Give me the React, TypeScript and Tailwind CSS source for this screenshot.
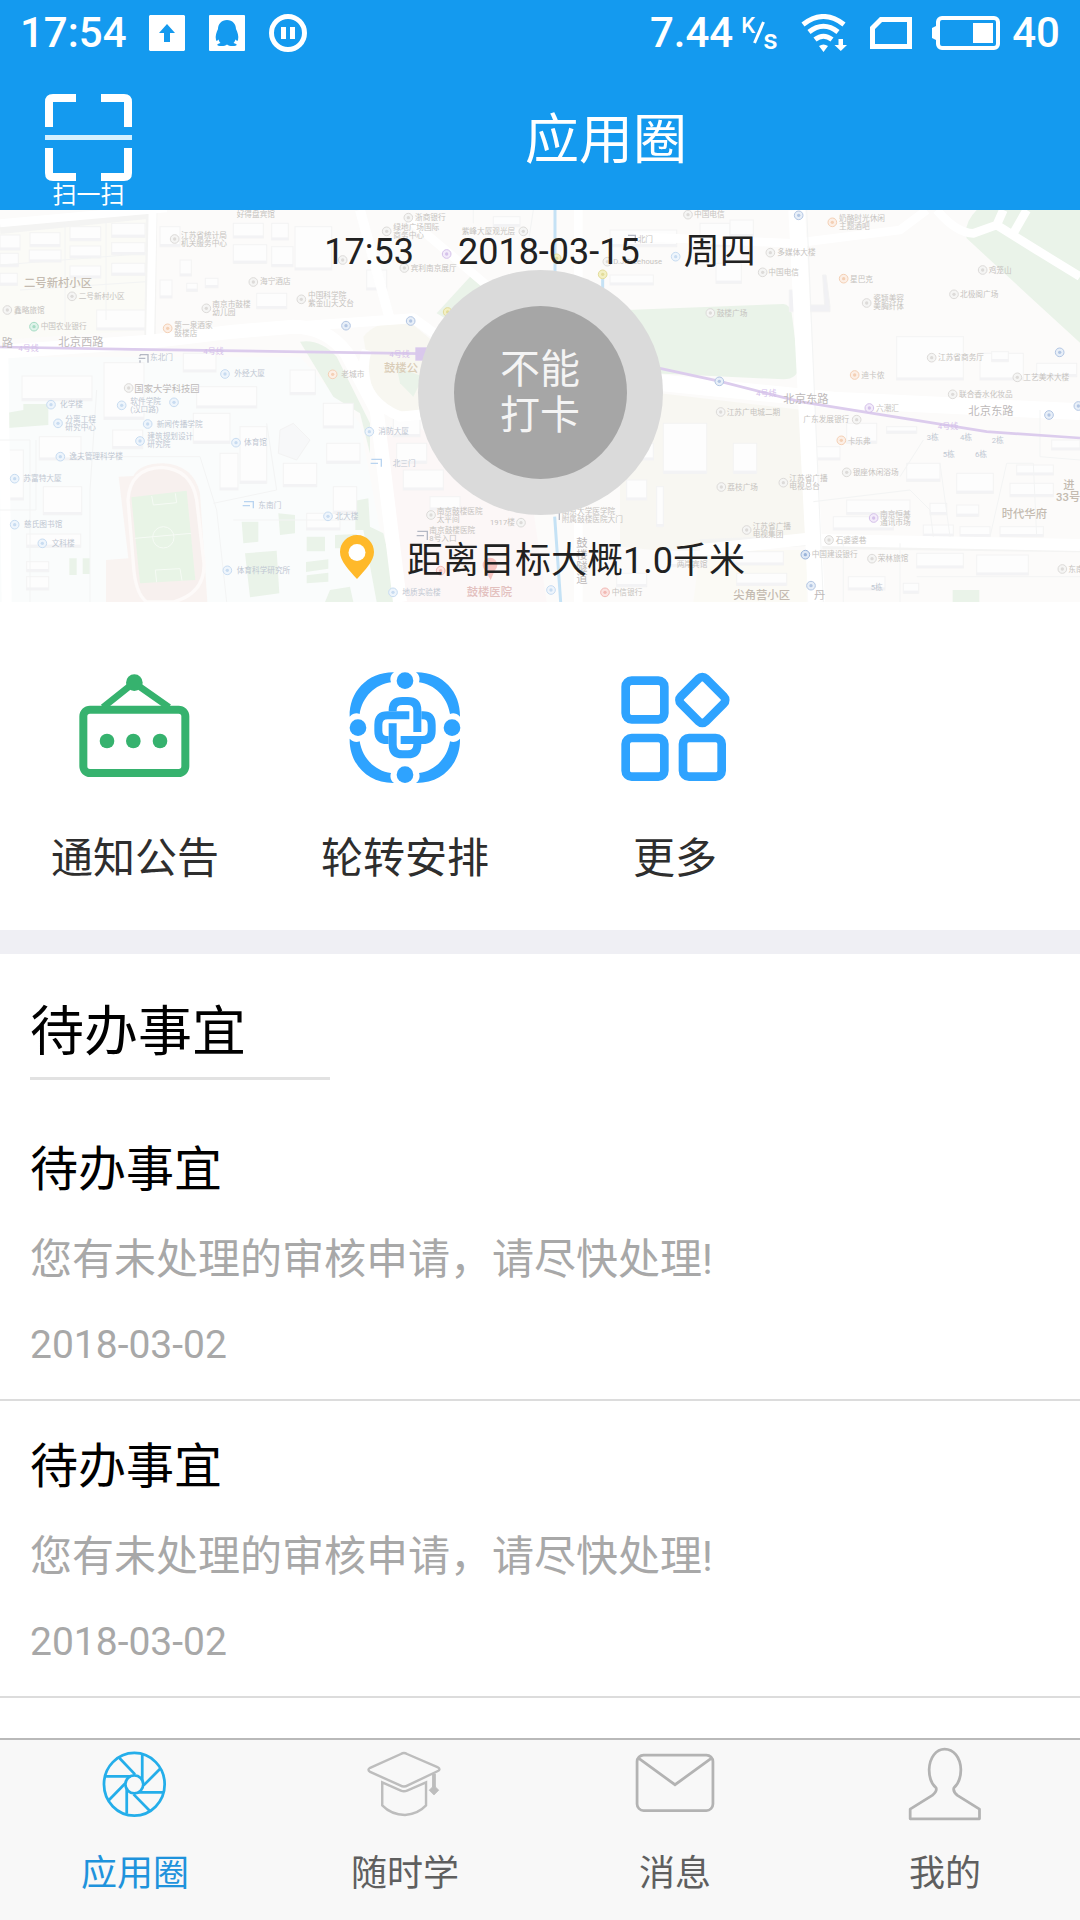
import type { ReactNode } from "react";

type Label = [x: number, y: number, text: string];

const GRAY_LABELS: Label[] = [
  [710, 12, "好得盘宾馆"], [543, 77, "江苏省统计局"], [543, 101, "机关服务中心"], [780, 215, "海宁酒店"],
  [924, 256, "中国科学院"], [924, 280, "紫金山天文台"], [637, 283, "南京市鼓楼"], [637, 307, "幼儿园"],
  [523, 345, "第一泉酒家"], [523, 369, "鼓楼店"], [236, 260, "二号新村小区"], [42, 300, "鑫略旅馆"],
  [122, 350, "中国农业银行"], [1024, 493, "老城市"], [1245, 22, "浙商银行"], [1180, 53, "绿地广场国际"],
  [1180, 77, "商务中心"], [1385, 64, "紫峰大厦观光层"], [1232, 174, "宾利南京展厅"],
  [2082, 14, "中国电信"], [1913, 87, "北门"], [1840, 153, "D.J.Treehouse"], [1310, 904, "南京鼓楼医院"],
  [1310, 928, "太平间"], [1470, 938, "1917楼"], [1288, 962, "南京鼓楼医院"], [1288, 986, "8号入口"],
  [1685, 905, "南京大学医学院"], [1685, 929, "附属鼓楼医院大门"], [1835, 1147, "中信银行"], [2030, 1063, "两岸宾馆"],
  [2517, 26, "奶酪时光休闲"], [2517, 50, "主题酒吧"], [2332, 128, "多媒体大楼"], [2305, 187, "中国电信"],
  [2550, 207, "星巴克"], [2620, 266, "瓷颖美容"], [2620, 290, "美胸纤体"], [2966, 181, "鸡笼山"],
  [2880, 254, "北极阁广场"], [2150, 309, "鼓楼广场"], [2814, 443, "江苏省商务厅"], [2584, 496, "迪卡侬"],
  [3070, 502, "工艺美术大楼"], [2877, 553, "联合香水化妆品"], [2628, 594, "六潮汇"], [2180, 606, "江苏广电城二期"],
  [2410, 629, "广东发展银行"], [2543, 693, "卡乐弗"], [2558, 788, "银座休闲浴场"], [2368, 806, "江苏省广播"],
  [2368, 830, "电视总台"], [2182, 832, "荔枝广场"], [2258, 948, "江苏省广播"], [2258, 972, "电视集团"],
  [2640, 912, "南京恒基"], [2640, 936, "通讯市场"], [2507, 990, "石婆婆巷"], [2435, 1034, "中国建设银行"],
  [2633, 1046, "荣林旅馆"], [3205, 1077, "东南"],
];

const CAMPUS_LABELS: Label[] = [
  [450, 443, "东北门"], [703, 491, "外经大厦"], [391, 574, "软件学院"], [391, 598, "(汉口路)"],
  [180, 584, "化学楼"], [196, 628, "分离工程"], [196, 652, "研究中心"], [470, 642, "新闻传播学院"],
  [442, 680, "建筑规划设计"], [442, 704, "研究院"], [732, 698, "体育馆"], [208, 740, "逸夫管理科学楼"],
  [70, 806, "苏富特大厦"], [72, 944, "慈氏图书馆"], [155, 1000, "文科楼"], [775, 887, "东南门"],
  [1006, 918, "北大楼"], [710, 1081, "体育科学研究所"], [1135, 664, "消防大厦"], [1178, 760, "北三门"],
  [1207, 1146, "地质实验楼"], [2780, 682, "3栋"], [2880, 682, "4栋"], [2975, 690, "2栋"],
  [2828, 732, "5栋"], [2925, 732, "6栋"], [2612, 1132, "5栋"],
];

const AREA_LABELS: Label[] = [
  [72, 219, "二号新村小区"], [3005, 912, "时代华府"], [2200, 1154, "尖角营小区"], [3190, 825, "进"],
  [3168, 860, "33号"],
];

const ROAD_LABELS: Label[] = [
  [5, 398, "路"], [175, 396, "北京西路"], [2350, 568, "北京东路"], [2905, 604, "北京东路"],
  [2442, 1156, "丹"], [1729, 1000, "鼓"], [1729, 1036, "楼"], [1729, 1072, "隧"], [1729, 1108, "道"],
];

const METRO_LABELS: Label[] = [[55, 414, "4号线"], [610, 424, "4号线"], [1168, 432, "4号线"], [2268, 551, "4号线"], [2813, 648, "4号线"]];

const GRAY_PINS = [
  [524, 87], [760, 216], [904, 268], [619, 295], [216, 259], [22, 300], [386, 534], [1225, 23], [1160, 64],
  [1570, 64], [1213, 174], [1028, 150], [2064, 14], [1822, 155], [1293, 915], [1563, 938], [2311, 128],
  [2288, 187], [2600, 279], [2948, 180], [2862, 253], [2131, 309], [2795, 443], [3052, 502], [2858, 553],
  [2162, 606], [2570, 629], [2540, 787], [2350, 818], [2164, 831], [2240, 960], [2487, 990], [2616, 1046],
  [3187, 1077],
];
const BLUE_PINS = [
  [675, 492], [153, 584], [174, 640], [365, 586], [522, 577], [443, 642], [420, 693], [708, 698], [181, 740],
  [44, 806], [44, 944], [127, 1000], [984, 919], [682, 1081], [1108, 665], [1179, 1147], [1653, 1140], [2027, 140],
];
const METRO_PINS = [[1038, 347], [1232, 333], [2158, 514], [3147, 615], [3235, 588], [2396, 16], [2433, 1127], [3179, 427]];
const ORANGE_PINS = [[503, 355], [998, 493], [2497, 37], [2531, 206], [2564, 495], [2524, 691]];

// x, y, width, height
const BLOCKS = [
  [0, 75, 60, 45], [90, 68, 90, 42], [210, 50, 92, 42], [335, 40, 100, 42], [0, 130, 55, 40], [88, 120, 95, 36],
  [210, 108, 92, 36], [335, 98, 100, 36], [0, 190, 52, 36], [210, 168, 92, 36], [335, 160, 100, 36], [290, 300, 150, 60],
  [480, 50, 60, 60], [540, 150, 34, 48], [560, 220, 32, 24], [616, 205, 38, 28], [480, 210, 36, 54], [700, 40, 90, 44],
  [700, 104, 100, 56], [815, 40, 50, 50], [815, 110, 64, 60], [885, 50, 110, 130], [770, 250, 90, 46], [550, 430, 98, 56],
  [66, 498, 210, 74], [312, 458, 120, 170], [590, 530, 180, 64], [580, 610, 110, 90], [338, 660, 90, 56], [118, 680, 125, 70],
  [130, 830, 115, 84], [80, 972, 162, 40], [80, 1055, 66, 30], [80, 1100, 66, 40], [22, 720, 48, 150], [720, 650, 80, 170],
  [660, 730, 54, 110], [850, 760, 100, 70], [980, 700, 100, 60], [920, 910, 100, 50], [870, 480, 76, 74], [970, 580, 90, 74],
  [1000, 830, 70, 80], [1180, 620, 80, 60], [1190, 700, 90, 60], [1210, 780, 120, 60], [1290, 860, 90, 40], [1100, 180, 60, 60],
  [1480, 20, 80, 30], [1830, 60, 200, 50], [1830, 195, 130, 30], [2100, 40, 90, 70], [2190, 30, 70, 50],
  [2148, 160, 76, 60], [2690, 380, 200, 130], [2940, 430, 130, 80], [2975, 425, 50, 30], [3110, 460, 120, 40],
  [2540, 640, 90, 60], [2660, 650, 90, 20], [2440, 710, 80, 40], [2720, 760, 100, 54], [2870, 790, 110, 60],
  [3030, 820, 130, 40], [3050, 765, 110, 30], [2540, 870, 190, 44], [2500, 920, 180, 40], [2790, 880, 50, 34],
  [2870, 885, 66, 34], [2770, 945, 90, 34], [2880, 950, 90, 30], [3000, 950, 130, 30], [2750, 1030, 140, 44],
  [2930, 1035, 155, 60], [2545, 1100, 110, 40], [2710, 1120, 46, 30], [2210, 1090, 150, 36], [2200, 1025, 150, 40],
  [2200, 700, 70, 90], [1990, 640, 130, 150], [1900, 700, 60, 50], [1880, 810, 60, 60], [1970, 830, 20, 120],
  [3155, 690, 85, 30], [1850, 1090, 90, 40], [2010, 1020, 110, 50],
];

function MapLabels({ items, className }: { items: Label[]; className: string }) {
  return (
    <g className={className}>
      {items.map(([x, y, text]) => (
        <text key={`${x}-${y}`} x={x} y={y} dominantBaseline="central">{text}</text>
      ))}
    </g>
  );
}

function Pins({ items, fill, stroke }: { items: number[][]; fill: string; stroke: string }) {
  return (
    <g>
      {items.map(([x, y]) => (
        <g key={`${x}-${y}`}>
          <circle cx={x} cy={y} r="13" fill={fill} stroke={stroke} strokeWidth="3" />
          <circle cx={x} cy={y} r="5" fill={stroke} />
        </g>
      ))}
    </g>
  );
}

/** Faded street map behind the punch-in button. */
function MapBackground() {
  return (
    <svg
      viewBox="0 0 3240 1176"
      preserveAspectRatio="xMidYMid slice"
      className="absolute inset-0 h-full w-full"
      aria-hidden="true"
    >
      <rect width="3240" height="1176" fill="#fcfbfa" />
      <path d="M0 30L440 20V360L0 390Z" fill="#fbfbf7" />
      <path d="M0 440H900L1080 640L1180 1176H0Z" fill="#fafcfc" />
      <path d="M1150 660L1240 640L1600 900L1640 1176H1210Z" fill="#fcf7f7" />
      <path d="M1980 550L2410 600L2430 1000L1960 1020L1860 1010V760Z" fill="#f8f7f2" />
      <path d="M2100 1020H2420V1176H2080Z" fill="#fbfaf5" />

      <g fill="#eaf3e9">
        <path d="M900 395Q960 385 1010 440L1110 640V730L1080 610L1000 560Z" />
        <path d="M1310 310L1420 190L1480 230L1360 340Z" />
        <path d="M1880 300L2350 282Q2370 284 2375 310L2396 470Q2394 506 2350 508L1960 490L1880 450Z" />
        <path d="M2900 0H3240V398L3100 270L2900 85Q2890 40 2930 0Z" />
        <path d="M14 610L70 600V582H145V645L14 655Z" />
        <path d="M725 935H775V995L730 1000ZM835 910L885 915V970L840 975ZM735 1030L830 1022L838 1150L750 1162Z" />
        <path d="M920 980H975V1024H920ZM1005 975L1070 972V1015H1005ZM918 1056L985 1048V1076L918 1086ZM920 1096L985 1088V1115L920 1120ZM975 1176L990 1140L1050 1130L1060 1176Z" />
        <path d="M208 1045H230V1095H208ZM248 1045H270V1092H248ZM335 1055L365 1050L370 1115H340ZM348 1130H378V1176H348Z" />
        <path d="M1066 872L1105 865L1110 950L1150 970L1200 1176H1130L1090 960H1066Z" />
        <path d="M2858 1140H2938V1176H2858Z" />
      </g>
      <path d="M1090 380Q1140 320 1240 345L1330 420L1280 600Q1180 620 1120 560Z" fill="#f8f7f1" />
      <path d="M1190 470L1270 500L1240 560L1200 520Z" fill="#eaf3e9" />

      <g fill="#fdfdfd" stroke="#f3f3f3" strokeWidth="3">
        {BLOCKS.map(([x, y, w, h]) => (
          <g key={`${x}-${y}`}>
            <rect x={x} y={y} width={w} height={h} />
            <rect x={x} y={y + h - 8} width={w} height="8" fill="#f3f3f5" stroke="none" />
          </g>
        ))}
        <path d="M2368 240V305H2490V290L2478 195H2468L2474 285H2384V240Z" fill="#f1f1f4" />
        <path d="M840 660L880 640L930 690L890 750L835 730Z" fill="#f7f8f9" />
      </g>

      <g fill="none" stroke="#f4f4f3" strokeWidth="34">
        <path d="M0 55L440 10M455 0L450 380" />
        <path d="M2390 0L2450 1176M2450 1000L3240 1010M2100 1005L2440 990" />
      </g>
      <g fill="none" stroke="#fff" strokeLinejoin="round">
        <path d="M0 40L240 18L500 -5M458 0L450 400" strokeWidth="24" />
        <path d="M0 425L450 395L700 365L880 350Q980 350 1040 430L1130 600L1200 1176" strokeWidth="42" />
        <path d="M880 350L1240 325L1330 390M1080 0L1170 330M1100 420Q1060 560 1200 620L1300 610" strokeWidth="30" />
        <path d="M1230 30L1500 260M1735 0V1176M1900 80L2380 100L2700 60L2780 0" strokeWidth="26" />
        <path d="M2390 0L2450 1176" strokeWidth="50" />
        <path d="M1900 510L2500 570L3240 605" strokeWidth="50" />
        <path d="M2810 0Q2870 70 2920 70L2990 45L3110 120L3240 200M2990 45L3010 0M3040 70L3080 0" strokeWidth="26" />
        <path d="M2460 990L3240 1005M2100 1020L2440 985" strokeWidth="36" />
        <path d="M10 430L20 1176" strokeWidth="30" />
      </g>
      <g fill="none" stroke="#f3f4f4" strokeWidth="3">
        <path d="M0 690H90V1176M270 1176V840L290 540M290 740H600L650 900L680 1176M640 880L830 840L800 640M700 930H1060M108 690V900H0" />
        <path d="M0 165L440 130M195 40V340M318 30V330M60 240L440 215M1420 0V40M1600 0L1580 130" />
        <path d="M2440 875L2730 840L2790 900L2800 980M2700 800L2770 690M2970 980L3020 760H3100L3110 980M2820 760L2850 980" />
        <path d="M2420 0L2470 1176M3120 600V740L3240 750M2530 1000V1176M2700 1000V1176M2750 1100H3240" />
      </g>

      <path d="M1665 0V185M1664 920L1682 1176M1808 205V260" stroke="#c5e2f5" strokeWidth="9" fill="none" />

      <path d="M356 800L400 798Q420 760 490 760Q580 765 600 850L622 1176H318V1050L385 1045Z" fill="#f9f3f1" />
      <path d="M384 870Q390 775 485 772Q575 778 590 870L612 1060Q615 1150 520 1176H440Q405 1150 400 1060Z" fill="#f7f0ee" stroke="#fdfaf9" strokeWidth="10" />
      <path d="M394 862L560 842L586 1110L420 1120Z" fill="#e8f4e6" />
      <g fill="none" stroke="#f6fbf5" strokeWidth="3">
        <path d="M404 985L574 970M455 858L460 885L530 878L526 850M470 1117L466 1080L540 1076L546 1112" />
        <circle cx="490" cy="982" r="32" />
      </g>

      <path d="M0 411L400 418L1260 431L1600 440L1980 475L2160 514L2400 575L2960 665L3240 684" fill="none" stroke="#dccced" strokeWidth="8" />
      <rect x="1246" y="412" width="40" height="40" fill="#d9c8ec" />

      <Pins items={GRAY_PINS} fill="#f5f5f4" stroke="#dddbd9" />
      <Pins items={BLUE_PINS} fill="#eef5fc" stroke="#c8dcf1" />
      <Pins items={METRO_PINS} fill="#e8eff8" stroke="#b3c6e3" />
      <Pins items={ORANGE_PINS} fill="#fcefe6" stroke="#f4d0b5" />
      <Pins items={[[102, 350]]} fill="#dff3ea" stroke="#a6dcc4" />
      <Pins items={[[1340, 132], [2608, 594], [2621, 924]]} fill="#f3ebfa" stroke="#d5c2ea" />
      <Pins items={[[2416, 1034]]} fill="#dfe8f5" stroke="#9bb4da" />
      <Pins items={[[1322, 1082], [1815, 1147]]} fill="#fbe4e2" stroke="#f2b9b4" />
      <Pins items={[[1343, 306], [1670, 145], [1808, 193]]} fill="#f3f0c4" stroke="#e3dc9a" />
      <path d="M1472 1110L1456 1082A22 22 0 1 1 1484 1082Z" fill="#f7c4c0" />
      <g fill="none" strokeWidth="4">
        <path d="M420 434H444V458M416 445H436M420 434V439M420 451V458" stroke="#b4b8c4" />
        <path d="M732 875H760V895M728 887H750M1114 748H1144V770M1112 760H1134" stroke="#b9d4f0" />
        <path d="M1252 964H1282V990M1250 977H1272M1650 908H1678V930M1884 76H1906V98" stroke="#b4b8c4" />
      </g>

      <MapLabels items={GRAY_LABELS} className="fill-[#c6c3c0] text-[23px]" />
      <MapLabels items={CAMPUS_LABELS} className="fill-[#bfc7d2] text-[23px]" />
      <MapLabels items={[[403, 534, "国家大学科技园"]]} className="fill-[#bdb9b9] text-[28px]" />
      <MapLabels items={ROAD_LABELS} className="fill-[#bdb9b9] text-[34px]" />
      <MapLabels items={AREA_LABELS} className="fill-[#c4bbb1] text-[34px] font-medium" />
      <MapLabels items={METRO_LABELS} className="fill-[#d4c0ea] text-[24px]" />
      <MapLabels items={[[1152, 474, "鼓楼公"]]} className="fill-[#dacdb8] text-[34px] font-medium" />
      <MapLabels items={[[1400, 1145, "鼓楼医院"]]} className="fill-[#e3c0be] text-[34px] font-medium" />
    </svg>
  );
}

function StatusBar() {
  return (
    <div className="flex h-[66px] items-center justify-between px-5 text-[42px] leading-none font-medium">
      <div className="flex items-center gap-[22px]">
        <span>17:54</span>
        <div className="flex items-center gap-6">
          <svg viewBox="0 0 36 36" className="size-9" aria-hidden="true">
            <path fill="#fff" fillRule="evenodd" d="M1 0H35L36 1V35L35 36H1L0 35V1ZM18 9L10 18H15V27H21V18H26Z" />
          </svg>
          <svg viewBox="0 0 36 36" className="size-9" aria-hidden="true">
            <rect width="36" height="36" rx="1" fill="#fff" />
            <path
              fill="#149aef"
              d="M18 5C12.500 5 9 9 9 14C7.500 17 6 21 7 25C7.500 27 9 25 9.500 24.500C10 26 10.500 27 11.500 28C7 29 7 31 12.500 31C15 31 16.500 30.500 18 29.500C19.500 30.500 21 31 23.500 31C29 31 29 29 24.500 28C25.500 27 26 26 26.500 24.500C27 25 28.500 27 29 25C30 21 28.500 17 27 14C27 9 23.500 5 18 5Z"
            />
          </svg>
          <svg viewBox="0 0 38 38" className="size-[38px]" aria-hidden="true">
            <circle cx="19" cy="19" r="16.500" fill="none" stroke="#fff" strokeWidth="5" />
            <path d="M12 13H17V25H12ZM21 13H26V25H21Z" fill="#fff" />
          </svg>
        </div>
      </div>
      <div className="flex items-center">
        <span>7.44</span>
        <span className="ml-2 flex h-9 w-9 text-[22px] leading-[22px]">
          <span>K</span>
          <svg viewBox="0 0 12 24" className="mt-1.5 -ml-0.5 h-6 w-3 shrink-0" aria-hidden="true">
            <path d="M10.500 1L1.500 22" stroke="#fff" strokeWidth="3" />
          </svg>
          <span className="-ml-0.5 self-end text-[28px]">s</span>
        </span>
        <svg viewBox="0 0 46 38" className="ml-6 h-[38px] w-[46px]" aria-hidden="true">
          <g fill="none" stroke="#fff" strokeWidth="5">
            <path d="M2 10.500Q22.500 -5.500 43 10.500" />
            <path d="M8 18Q22.500 6.500 37 18" />
            <path d="M14 25.500Q22.500 19 31 25.500" />
          </g>
          <path d="M18 32Q22.500 29 27 32L22.500 38ZM37.500 25H42V31H46L39.800 37L33.500 31H37.500Z" fill="#fff" />
        </svg>
        <svg viewBox="0 0 42 32" className="ml-[23px] h-8 w-[42px]" aria-hidden="true">
          <path d="M2.500 11V29.500H39.500V2.500H11Z" fill="none" stroke="#fff" strokeWidth="5" />
        </svg>
        <svg viewBox="0 0 68 34" className="ml-5 h-[34px] w-[68px]" aria-hidden="true">
          <rect x="6" y="2" width="60" height="30" rx="4" fill="none" stroke="#fff" strokeWidth="4" />
          <path d="M0 12L4 10V24L0 22ZM41 7H61V27H41Z" fill="#fff" />
        </svg>
        <span className="ml-3">40</span>
      </div>
    </div>
  );
}

function NoticeIcon() {
  return (
    <svg viewBox="0 0 336 336" className="size-28" aria-hidden="true">
      <g fill="none" stroke="#36b26e">
        <rect x="13" y="113" width="306" height="190" rx="20" strokeWidth="24" />
        <path d="M72 106L165 32L270 106" strokeWidth="20" />
      </g>
      <g fill="#36b26e">
        <circle cx="166" cy="32" r="25" />
        <circle cx="84" cy="207" r="22" />
        <circle cx="163" cy="207" r="22" />
        <circle cx="243" cy="207" r="22" />
      </g>
    </svg>
  );
}

function RotationIcon() {
  return (
    <svg viewBox="0 0 336 336" className="size-28" aria-hidden="true">
      <g fill="#2ea3ff">
        <path d="M135 1C55 0 0 60 2 134C12 124 22 122 32 126C40 75 78 37 126 31C122 20 125 8 135 1Z" />
        <path d="M201 1C281 0 335 60 333 134C323 124 313 122 303 126C295 75 257 37 210 31C214 20 211 8 201 1Z" />
        <path d="M135 333C55 334 0 274 2 200C12 210 22 212 32 208C40 259 78 297 126 303C122 314 125 326 135 333Z" />
        <path d="M201 333C281 334 335 274 333 200C323 210 313 212 303 208C295 259 257 297 210 303C214 314 211 326 201 333Z" />
        <circle cx="168" cy="26" r="25" />
        <circle cx="27" cy="167" r="25" />
        <circle cx="309" cy="167" r="25" />
        <circle cx="168" cy="308" r="25" />
      </g>
      <g fill="none" stroke="#2ea3ff" strokeWidth="24">
        <path d="M131 118V114Q131 87 160 87H176Q205 87 205 114V180" />
        <path d="M181 130H116Q88 130 88 158V176Q88 204 114 204H119" />
        <path d="M131 154V218Q131 247 160 247H176Q205 247 205 218V216" />
        <path d="M155 204H220Q248 204 248 176V158Q248 130 222 130H217" />
      </g>
    </svg>
  );
}

function MoreIcon() {
  return (
    <svg viewBox="0 0 336 336" className="size-28" aria-hidden="true">
      <g fill="none" stroke="#2ea3ff" strokeWidth="26">
        <rect x="20" y="26" width="116" height="116" rx="18" />
        <rect x="20" y="198" width="116" height="116" rx="18" />
        <rect x="192" y="198" width="116" height="116" rx="18" />
        <rect x="197" y="31" width="106" height="106" rx="15" transform="rotate(45 250 84)" />
      </g>
    </svg>
  );
}

function TabIcon({ color, children }: { color: string; children: ReactNode }) {
  return (
    <svg viewBox="0 0 232 232" className="size-20" fill="none" stroke={color} strokeWidth="8" aria-hidden="true">
      {children}
    </svg>
  );
}

const tools = [
  { label: "通知公告", icon: <NoticeIcon /> },
  { label: "轮转安排", icon: <RotationIcon /> },
  { label: "更多", icon: <MoreIcon /> },
];

const todos = [
  { id: 1, title: "待办事宜", text: "您有未处理的审核申请，请尽快处理!", date: "2018-03-02" },
  { id: 2, title: "待办事宜", text: "您有未处理的审核申请，请尽快处理!", date: "2018-03-02" },
];

const tabs = [
  {
    label: "应用圈",
    active: true,
    icon: (
      <TabIcon color="#24aeea">
        <ellipse cx="114" cy="117" rx="88" ry="91" />
        <circle cx="114" cy="117" r="26" />
        <path d="M137 31V107M189 72L141 120M199 140H124M160 195L112 146M92 202V127M40 163L88 114M32 94H104M70 40L116 88" />
      </TabIcon>
    ),
  },
  {
    label: "随时学",
    active: false,
    icon: (
      <TabIcon color="#bdbdbd">
        <path d="M104 29Q113 23 122 29L210 67Q222 73 210 79L124 120Q113 126 102 120L15 81Q5 75 15 69Z" strokeWidth="7" />
        <path d="M50 111V178Q76 205 116 206Q154 203 177 178V111L122 135Q113 139 104 135Z" strokeWidth="7" />
        <path d="M200 86V125" strokeWidth="11" />
        <path d="M200 120L214 134L200 148L186 134Z" fill="#bdbdbd" strokeWidth="2" />
      </TabIcon>
    ),
  },
  {
    label: "消息",
    active: false,
    icon: (
      <TabIcon color="#b3b3b3">
        <rect x="6" y="32" width="220" height="161" rx="19" />
        <path d="M11 42L116 118L221 42" />
      </TabIcon>
    ),
  },
  {
    label: "我的",
    active: false,
    icon: (
      <TabIcon color="#b3b3b3">
        <path
          strokeLinejoin="round"
          d="M15 217V189L79 149Q94 137 90 127C76 115 70 95 70 75C71 38 91 15 115 15C140 15 161 38 162 75C162 95 155 115 142 127Q138 137 152 149L216 189V217Z"
        />
      </TabIcon>
    ),
  },
];

export default function App() {
  return (
    <div
      lang="zh-CN"
      className="flex min-h-screen flex-col bg-white font-['Roboto','Noto_Sans_CJK_SC',sans-serif] text-black"
    >
      <header className="bg-[#149aef] text-white">
        <StatusBar />
        <div className="flex h-36 items-center">
          <button className="ml-[45px] flex h-full w-[87px] flex-col items-center pt-7">
            <svg viewBox="0 0 87 87" className="size-[87px] shrink-0" aria-hidden="true">
              <path
                d="M31 4H8Q4 4 4 8V33M56 4H79Q83 4 83 8V33M4 54V79Q4 83 8 83H31M83 54V79Q83 83 79 83H56"
                fill="none"
                stroke="#fff"
                strokeWidth="8"
              />
              <path d="M0 43.500H87" stroke="#d3f0ff" strokeWidth="5" />
            </svg>
            <span className="text-2xl leading-7">扫一扫</span>
          </button>
          <h1 className="flex-1 pt-1.5 text-center text-[54px] leading-none">应用圈</h1>
        </div>
      </header>

      <section className="relative h-[392px] overflow-hidden">
        <MapBackground />
        <div className="relative flex flex-col items-center pt-6 text-4xl leading-9 text-[#212121]">
          <div className="flex gap-11">
            <span>17:53</span>
            <span>2018-03-15</span>
            <span>周四</span>
          </div>
          <button className="flex size-[245px] items-center justify-center rounded-full bg-[#dadada]">
            <span className="flex size-[173px] flex-col items-center justify-center rounded-full bg-[#a6a6a6] text-[40px] leading-[46px] text-[#f4f4f4]">
              <span>不能</span>
              <span>打卡</span>
            </span>
          </button>
          <div className="mt-5 flex items-end gap-8 pl-1">
            <svg viewBox="0 0 36 44" className="h-11 w-9" aria-hidden="true">
              <path
                fill="#ffb92a"
                d="M18 0C8 0 1 8 1 17C1 26 10 35 18 44C26 35 35 26 35 17C35 8 28 0 18 0Z"
              />
              <circle cx="18" cy="17.500" r="8.500" fill="#fff" />
            </svg>
            <span>距离目标大概1.0千米</span>
          </div>
        </div>
      </section>

      <section className="grid grid-cols-4 pt-[70px] pb-[50px]">
        {tools.map((tool) => (
          <button key={tool.label} className="flex flex-col items-center gap-[54px]">
            {tool.icon}
            <span className="text-[42px] leading-[42px] text-[#2e2e2e]">{tool.label}</span>
          </button>
        ))}
      </section>

      <main className="flex-1 border-t-[24px] border-[#efeff4] pt-[52px]">
        <h2 className="ml-[30px] w-[300px] border-b-[3px] border-[#e2e2e2] pb-[17px] text-[54px] leading-[54px]">
          待办事宜
        </h2>
        <ul className="mt-6">
          {todos.map((todo) => (
            <li key={todo.id} className="border-b-2 border-[#dcdcdc] px-[30px] pt-[42px] pb-[34px]">
              <h3 className="text-5xl leading-[48px]">{todo.title}</h3>
              <p className="mt-[45px] text-[42px] leading-[42px] text-[#a8a8a8]">{todo.text}</p>
              <p className="mt-[45px] text-[39px] leading-[39px] text-[#a8a8a8]">{todo.date}</p>
            </li>
          ))}
        </ul>
      </main>

      <nav className="sticky bottom-0 grid grid-cols-4 border-t-2 border-[#b9b9b9] bg-[#f8f8f8]">
        {tabs.map((tab) => (
          <a
            key={tab.label}
            href="#"
            aria-current={tab.active ? "page" : undefined}
            className={`flex flex-col items-center gap-8 pt-1 pb-7 text-4xl leading-9 ${
              tab.active ? "text-[#1f93dc]" : "text-[#5f5f5f]"
            }`}
          >
            {tab.icon}
            <span>{tab.label}</span>
          </a>
        ))}
      </nav>
    </div>
  );
}
